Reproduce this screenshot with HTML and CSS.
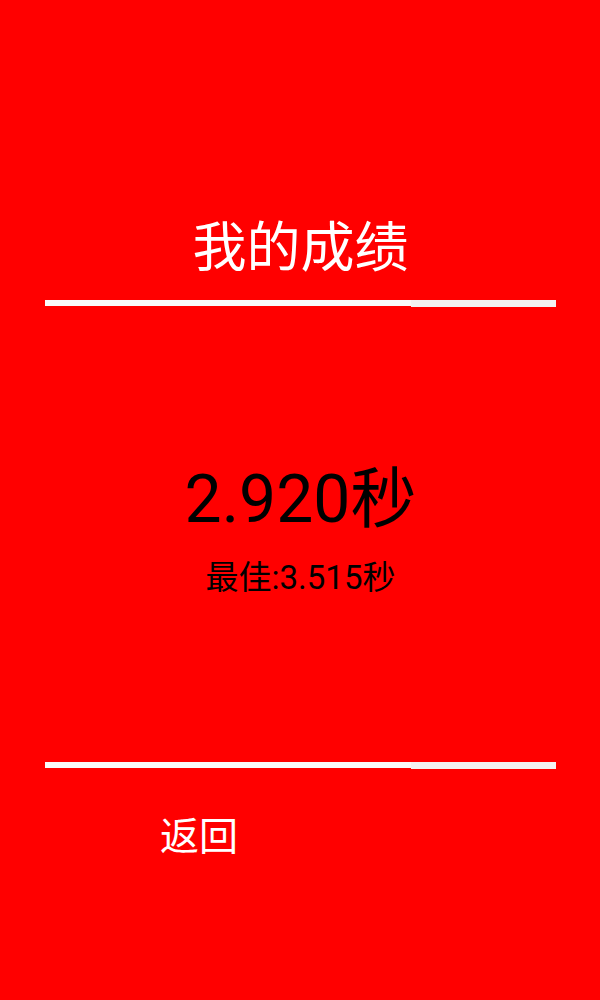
FILE: index.html
```html
<!DOCTYPE html>
<html lang="zh-CN">
<head>
<meta charset="utf-8">
<title>我的成绩</title>
<link rel="stylesheet" href="styles.css">
</head>
<body>
<div class="page">
  <h1 class="title">我的成绩</h1>
  <div class="rule"><span class="rule-a"></span><span class="rule-b"></span></div>
  <div class="score">2.920秒</div>
  <div class="best">最佳:3.515秒</div>
  <div class="rule rule-bottom"><span class="rule-a"></span><span class="rule-b"></span></div>
  <div class="back">返回</div>
</div>
</body>
</html>
```

FILE: styles.css
```css
html, body {
  margin: 0;
  padding: 0;
  background: #ff0000;
  height: 100%;
}
body {
  font-family: Roboto, "Noto Sans CJK SC", sans-serif;
}
.page {
  padding: 0 44px 0 45px;
  display: flex;
  flex-direction: column;
}
.title {
  margin: 219px 0 0 0;
  font-size: 54px;
  font-weight: normal;
  line-height: 60px;
  color: #ffffff;
  text-align: center;
}
.rule {
  display: flex;
  align-items: flex-start;
  margin-top: 21px;
  height: 8px;
}
.rule-a {
  flex: 0 0 366px;
  height: 6px;
  background: #fafafa;
}
.rule-b {
  flex: 1;
  height: 7px;
  background: #f3f3f3;
}
.score {
  margin-top: 152px;
  font-size: 66px;
  line-height: 80px;
  color: #000000;
  text-align: center;
}
.best {
  margin-top: 18px;
  font-size: 33px;
  line-height: 40px;
  color: #000000;
  text-align: center;
}
.rule-bottom {
  margin-top: 164px;
}
.back {
  margin: 44px 0 0 115px;
  font-size: 39px;
  line-height: 46px;
  color: #ffffff;
}
```
